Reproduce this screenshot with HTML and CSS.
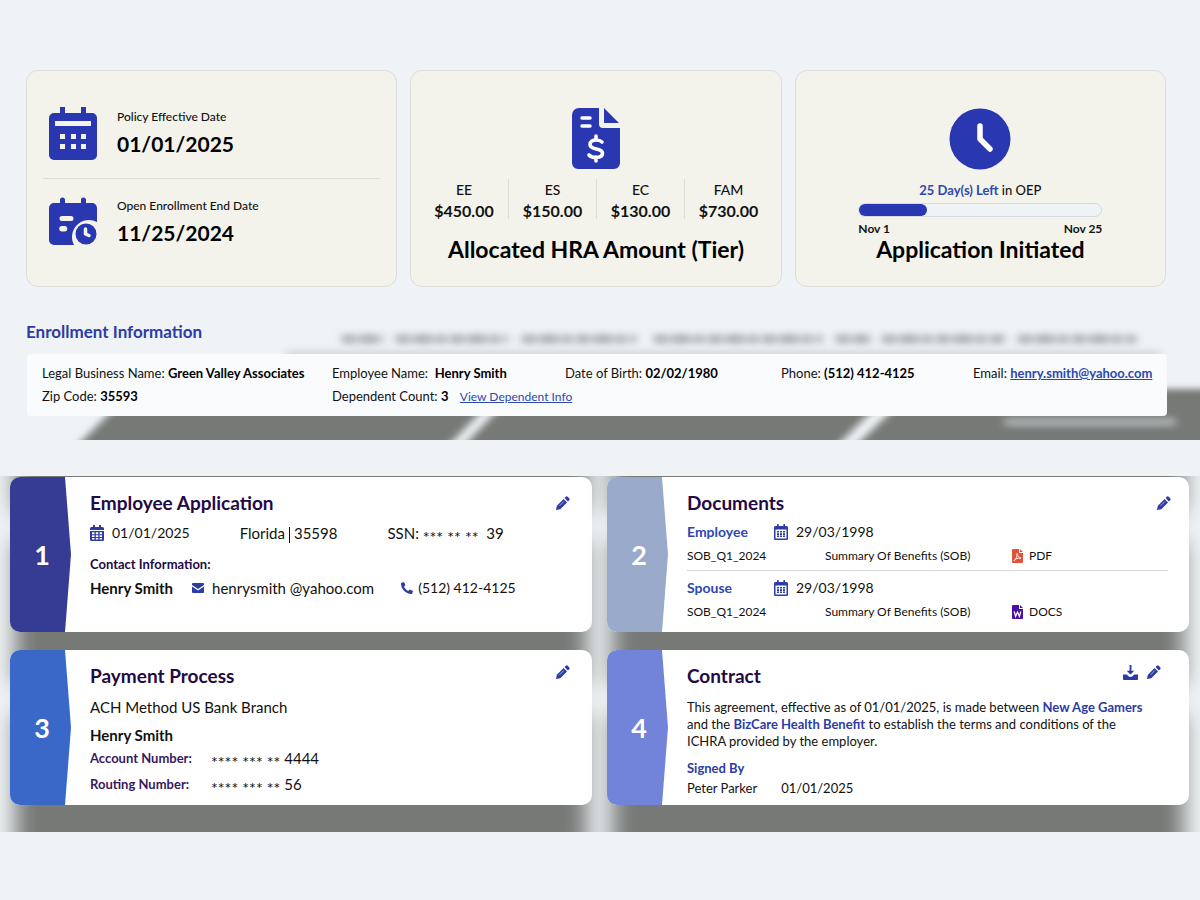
FILE: index.html
```
<!DOCTYPE html>
<html lang="en">
<head>
<meta charset="utf-8">
<title>ICHRA Enrollment</title>
<link rel="stylesheet" href="styles.css">
</head>

<body>
<svg width="0" height="0" class="sprite" aria-hidden="true">
  <symbol id="i-pen" viewBox="0 0 16 16">
    <path d="M1 15l1-4.600 7.200-7.200 3.600 3.600L5.600 14z"/>
    <path d="M10.200 2.200l1.300-1.300a1.400 1.400 0 0 1 2 0l1.600 1.600a1.400 1.400 0 0 1 0 2l-1.300 1.300z"/>
    <path d="M4.800 10.500l4.600-4.600" stroke="#fff" stroke-width=".6"/>
  </symbol>
  <symbol id="i-cal" viewBox="0 0 14 16">
    <path d="M3 0h2v2h4V0h2v2h1.500A1.500 1.500 0 0 1 14 3.500V5H0V3.500A1.500 1.500 0 0 1 1.500 2H3z"/>
    <path fill-rule="evenodd" d="M0 6h14v8.500a1.500 1.500 0 0 1-1.500 1.500h-11A1.500 1.500 0 0 1 0 14.500zM2 7.300v1.900h2.500V7.300zm3.800 0v1.900h2.500V7.300zm3.800 0v1.900H12V7.300zM2 10.200v1.900h2.500v-1.900zm3.800 0v1.900h2.500v-1.900zm3.800 0v1.900H12v-1.900zM2 13.100v1.500h2.500v-1.500zm3.800 0v1.500h2.500v-1.500zm3.800 0v1.500H12v-1.500z"/>
  </symbol>
  <symbol id="i-calo" viewBox="0 0 14 16">
    <path fill-rule="evenodd" d="M3 0h1.600v2h4.800V0H11v2h1.500A1.500 1.500 0 0 1 14 3.500v11a1.500 1.500 0 0 1-1.500 1.500h-11A1.500 1.500 0 0 1 0 14.500v-11A1.500 1.500 0 0 1 1.500 2H3zM1.500 5.500v9h11v-9z"/>
    <path d="M3 7h2v1.600H3zm3 0h2v1.600H6zm3 0h2v1.600H9zM3 9.300h2v1.600H3zm3 0h2v1.600H6zm3 0h2v1.600H9zM3 11.600h2v1.400H3zm3 0h2v1.400H6zm3 0h2v1.400H9z"/>
  </symbol>
</svg>

<section class="overview">
  <div class="tiles">
    <div class="tile tile-dates">
      <div class="date-row">
        <svg class="ico-big" viewBox="0 0 48 54">
          <path fill="#2937b0" d="M11 0h5v6h16V0h5v6h6a5 5 0 0 1 5 5v37a5 5 0 0 1-5 5H5a5 5 0 0 1-5-5V11a5 5 0 0 1 5-5h6z"/>
          <path fill="#f3f3ec" d="M6 14h36v5H6zM11 27h5v5h-5zm11 0h5v5h-5zm10 0h5v5h-5zM11 37h5v5h-5zm11 0h5v5h-5zm10 0h5v5h-5z"/>
        </svg>
        <div>
          <p class="date-label">Policy Effective Date</p>
          <p class="date-value">01/01/2025</p>
        </div>
      </div>
      <div class="date-row">
        <svg class="ico-big" viewBox="0 0 48 54">
          <path fill="#2937b0" d="M11 4a2.500 2.500 0 0 1 5 0v3h16V4a2.500 2.500 0 0 1 5 0v3h6a5 5 0 0 1 5 5v37H5a5 5 0 0 1-5-5V12a5 5 0 0 1 5-5h6z"/>
          <path fill="#f3f3ec" d="M13 20h9a2.500 2.500 0 0 1 0 5h-9a2.500 2.500 0 0 1 0-5zM13 30h2.500a2.500 2.500 0 0 1 0 5.500H13a2.500 2.500 0 0 1 0-5.500zM48 26a17 17 0 0 0-23 23h23z"/>
          <circle cx="37" cy="38" r="10.500" fill="#2937b0"/>
          <path fill="none" stroke="#f3f3ec" stroke-width="3.500" stroke-linecap="round" stroke-linejoin="round" d="M36.500 33v5l3.500 1.500"/>
        </svg>
        <div>
          <p class="date-label">Open Enrollment End Date</p>
          <p class="date-value">11/25/2024</p>
        </div>
      </div>
    </div>

    <div class="tile">
      <svg class="ico-doc" viewBox="0 0 48 62">
        <path fill="#2937b0" d="M7 0h20v16a4 4 0 0 0 4 4h17v35a6 6 0 0 1-6 6H6a6 6 0 0 1-6-6V7a7 7 0 0 1 7-7zM32 0l15 15H32z"/>
        <path fill="none" stroke="#fff" stroke-width="3.500" stroke-linecap="round" d="M10 10h8M10 18h8"/>
        <path fill="none" stroke="#fff" stroke-width="3.600" stroke-linecap="round" d="M24 28v4M24 49v4M30 34c-1.500-1.500-3.500-2-6-2-3.500 0-6 1.600-6 4.400 0 6 12.500 3 12.500 8.700 0 3-2.800 4.400-6.500 4.400-3 0-5.500-.7-7-2.500"/>
      </svg>
      <ul class="tiers">
        <li>EE<b>$450.00</b></li>
        <li>ES<b>$150.00</b></li>
        <li>EC<b>$130.00</b></li>
        <li>FAM<b>$730.00</b></li>
      </ul>
      <h2>Allocated HRA Amount (Tier)</h2>
    </div>

    <div class="tile">
      <svg class="ico-clock" viewBox="0 0 62 62">
        <circle cx="31" cy="31" r="30.500" fill="#2937b0"/>
        <path fill="none" stroke="#fff" stroke-width="5.500" stroke-linecap="round" stroke-linejoin="round" d="M31 18v13l10 10"/>
      </svg>
      <p class="days"><b>25 Day(s) Left</b> in OEP</p>
      <div class="progress">
        <div class="bar"><span style="width: 28%"></span></div>
        <div class="range"><span>Nov 1</span><span>Nov 25</span></div>
      </div>
      <h2>Application Initiated</h2>
    </div>
  </div>

  <h3>Enrollment Information</h3>
  <div class="info-wrap">
    <svg class="backdrop" viewBox="0 0 1200 130" preserveAspectRatio="none" aria-hidden="true">
      <defs>
        <filter id="soft" x="-10%" y="-50%" width="120%" height="200%"><feGaussianBlur stdDeviation="4 3"/></filter>
      </defs>
      <g filter="url(#soft)">
        <path fill="#777977" d="M128 79H497L434 145H62zM512 79H888L822 145H449zM908 79H1160V73H1260V145H840z"/>
        <path fill="none" stroke="#a9adae" stroke-width="8" d="M1005 106H1175"/>
        <path fill="none" stroke="#a3a8a9" stroke-width="10" stroke-dasharray="14 3 20 3 10 4" opacity=".8" d="M342 23H384M396 23H508M522 23H636M654 23H822M836 23H870M882 23H1004M1018 23H1136"/>
        <path fill="none" stroke="#d3d8d9" stroke-width="9" d="M286 39H1160"/>
      </g>
    </svg>
    <div class="info">
      <p>Legal Business Name: <b>Green Valley Associates</b></p>
      <p>Employee Name: &nbsp;<b>Henry Smith</b></p>
      <p>Date of Birth: <b>02/02/1980</b></p>
      <p>Phone: <b>(512) 412-4125</b></p>
      <p>Email: <b><a href="#">henry.smith@yahoo.com</a></b></p>
      <p>Zip Code: <b>35593</b></p>
      <p class="dependents">Dependent Count: <b>3</b> <a href="#">View Dependent Info</a></p>
    </div>
  </div>
</section>

<section class="steps">
  <article class="step step1">
    <div class="num">1</div>
    <div class="body">
      <header><h4>Employee Application</h4><button type="button" title="Edit"><svg><use href="#i-pen"/></svg></button></header>
      <div class="line app-line">
        <span class="with-ico date"><svg class="ico"><use href="#i-cal"/></svg>01/01/2025</span>
        <span>Florida<i class="sep"></i>35598</span>
        <span>SSN: <span class="mask">*** ** **</span> &nbsp;39</span>
      </div>
      <h5>Contact Information:</h5>
      <div class="line contact-line">
        <b>Henry Smith</b>
        <span class="with-ico"><svg class="ico-s" viewBox="0 0 12 10"><path d="M1 0h10a1 1 0 0 1 1 1v1L6 6 0 2V1a1 1 0 0 1 1-1zM0 3.400l6 4 6-4V9a1 1 0 0 1-1 1H1a1 1 0 0 1-1-1z"/></svg>henrysmith @yahoo.com</span>
        <span class="with-ico phone"><svg class="ico-s" viewBox="0 0 12 12"><path d="M.6.800L3 0l1.500 3.200L3 4.600C3.700 6.500 5.300 8.200 7.300 9l1.400-1.500L12 9l-.8 2.500c-.2.400-.5.500-1 .5C4.600 11.800.3 7.300 0 1.800c0-.5.2-.800.6-1z"/></svg>(512) 412-4125</span>
      </div>
    </div>
  </article>

  <article class="step step2">
    <div class="num">2</div>
    <div class="body">
      <header><h4>Documents</h4><button type="button" title="Edit"><svg><use href="#i-pen"/></svg></button></header>
      <div class="doc">
        <b class="who">Employee</b>
        <span class="with-ico when"><svg class="ico"><use href="#i-calo"/></svg>29/03/1998</span>
        <span class="file">SOB_Q1_2024</span>
        <span class="kind">Summary Of Benefits (SOB)</span>
        <span class="type"><svg viewBox="0 0 11 14"><path fill="#e0533a" d="M1 0h6v4h4v9a1 1 0 0 1-1 1H1a1 1 0 0 1-1-1V1a1 1 0 0 1 1-1zM8 0l3 3H8z"/><path fill="none" stroke="#fff" stroke-width=".9" d="M5 4.500c.5 3-1 5.500-3 7.300 1-2 4-3 7-2.600C7 9 5.500 7 5 4.500"/></svg>PDF</span>
      </div>
      <div class="doc">
        <b class="who">Spouse</b>
        <span class="with-ico when"><svg class="ico"><use href="#i-calo"/></svg>29/03/1998</span>
        <span class="file">SOB_Q1_2024</span>
        <span class="kind">Summary Of Benefits (SOB)</span>
        <span class="type"><svg viewBox="0 0 11 14"><path fill="#4a0fa5" d="M1 0h6v4h4v9a1 1 0 0 1-1 1H1a1 1 0 0 1-1-1V1a1 1 0 0 1 1-1zM8 0l3 3H8z"/><path fill="none" stroke="#fff" stroke-width="1.200" d="M2.200 6.500l1.400 5 1.900-4.500 1.900 4.500 1.400-5"/></svg>DOCS</span>
      </div>
    </div>
  </article>

  <article class="step step3">
    <div class="num">3</div>
    <div class="body">
      <header><h4>Payment Process</h4><button type="button" title="Edit"><svg><use href="#i-pen"/></svg></button></header>
      <p class="method">ACH Method US Bank Branch</p>
      <p class="holder">Henry Smith</p>
      <dl>
        <dt>Account Number:</dt>
        <dd><span class="mask">**** *** **</span> 4444</dd>
        <dt>Routing Number:</dt>
        <dd><span class="mask">**** *** **</span> 56</dd>
      </dl>
    </div>
  </article>

  <article class="step step4">
    <div class="num">4</div>
    <div class="body">
      <header>
        <h4>Contract</h4>
        <button type="button" title="Download"><svg viewBox="0 0 16 16"><path d="M7 0h2v6h3L8 10 4 6h3zM0 10h4l2.500 2.500h3L12 10h4v5a1 1 0 0 1-1 1H1a1 1 0 0 1-1-1z"/></svg></button>
        <button type="button" title="Edit"><svg><use href="#i-pen"/></svg></button>
      </header>
      <p class="terms">This agreement, effective as of 01/01/2025, is made between <b>New Age Gamers</b> and the <b>BizCare Health Benefit</b> to establish the terms and conditions of the ICHRA provided by the employer.</p>
      <p class="signed">Signed By</p>
      <p class="signer"><span>Peter Parker</span><span>01/01/2025</span></p>
    </div>
  </article>
</section>
</body>
</html>
```
FILE: styles.css
```
* {box-sizing: border-box;}
body {margin: 0; background: #eff3f5; color: #111; font-family: Lato, "Liberation Sans", sans-serif; font-size: 13px; line-height: 20px;}
h2, h3, h4, h5, p, ul, dl, dd {margin: 0; padding: 0;}
.sprite {position: absolute;}

.overview {padding-top: 70px;}
.tiles {display: grid; grid-template-columns: repeat(3, 1fr); gap: 13px; padding: 0 34px 0 26px;}
.tile {display: flex; flex-direction: column; align-items: center; height: 217px; padding-top: 37px; border: 1px solid #dcdddb; border-radius: 12px; background: #f3f3ec;}
.tile h2 {font-size: 23px; line-height: 28px; font-weight: 900; color: #000;}
.tile-dates {align-items: stretch; padding: 19px 16px;}
.date-row {display: flex; align-items: center; gap: 20px; height: 88px; padding-left: 6px;}
.date-row + .date-row {border-top: 1px solid #dcdddb;}
.ico-big {width: 48px; height: 54px;}
.date-label {font-size: 12px; line-height: 20px; font-weight: 500;}
.date-value {font-size: 21px; line-height: 34px; font-weight: 900; color: #000;}
.ico-doc {width: 48px; height: 62px;}
.ico-clock {width: 62px; height: 62px;}

.tiers {display: flex; margin: 9px 0 16px; list-style: none; font-size: 14px; line-height: 22px; text-align: center; font-weight: 500;}
.tiers li {width: 88px; height: 40px;}
.tiers li + li {border-left: 1px solid #dcdddb;}
.tiers b {display: block; font-size: 16px; line-height: 20px;}
.tile h2, .date-value {font-weight: 700;}

.days {margin-top: 10px; font-weight: 500;}
.days b {color: #2c48b0;}
.progress {width: 244px; margin-top: 3px;}
.bar {height: 14px; border: 1px solid #d5d9dc; border-radius: 7px; background: #eff3f5;}
.bar span {display: block; height: 12px; border-radius: 6px; background: #2937b0;}
.range {display: flex; justify-content: space-between; margin-top: 6px; font-size: 12px; line-height: 12px; font-weight: 700;}

.overview h3 {margin: 34px 26px 13px; font-size: 17px; line-height: 21px; color: #2c3ba5;}
.info-wrap {position: relative; overflow: hidden; height: 124px; margin-top: -39px; padding: 38px 33px 0 27px;}
.backdrop {position: absolute; left: 0; top: 0; width: 100%; height: 130px;}
.info {position: relative; display: grid; grid-template-columns: 290px 233px 216px 192px auto; align-content: center; row-gap: 3px; height: 62px; padding: 0 0 0 15px; border-radius: 4px; background: #f9fbfd; white-space: nowrap;}
.info b {color: #000;}
.info a {color: #2c48b0;}
.dependents a {margin-left: 8px; font-size: 12px;}

.steps {display: grid; grid-template-columns: 1fr 1fr; gap: 18px 15px; height: 356px; margin-top: 36px; padding: 1px 11px 0 10px; overflow: hidden; align-content: start;}
.step {display: flex; height: 155px; border-radius: 10px; background: #fff; box-shadow: 0 58px 22px -5px #777977;}
.step1, .step2 {box-shadow: 0 58px 22px -5px #777977, 0 -114px 22px -5px #777977;}
.num {flex: 0 0 61px; padding-left: 3px; border-radius: 10px 0 0 10px; clip-path: polygon(0 0, 55px 0, 61px 50%, 55px 100%, 0 100%); color: #fff; font-size: 27px; font-weight: 700; line-height: 155px; text-align: center;}
.step1 .num {background: #363b94;}
.step2 .num {background: #99aacb;}
.step3 .num {background: #3968c8;}
.step4 .num {background: #7283da;}
.body {flex: 1; padding: 14px 22px 0 19px;}
.body header {display: flex; align-items: center; gap: 8px; height: 24px;}
.body h4 {flex: 1; font-size: 19px; line-height: 24px; color: #230a45;}
.body button {width: 15px; height: 15px; padding: 0; border: 0; background: none; cursor: pointer;}
.body button svg {display: block; width: 15px; height: 15px; fill: #2c3ba5;}
.step3 button, .step4 button {margin-bottom: 8px;}
.step4 header {padding-right: 6px;}
.body h5 {font-size: 13px; line-height: 20px; color: #230a45;}
.line {display: flex; font-size: 15px; line-height: 24px; white-space: nowrap;}
.with-ico {display: flex; align-items: center; gap: 8px; fill: #2c3ba5;}
.ico {width: 14px; height: 16px;}
.ico-s {width: 12px; height: 12px;}
.app-line {gap: 50px; margin: 6px 0 9px;}
.contact-line {gap: 19px; margin-top: 2px;}
.date, .phone {font-size: 14px;}
.phone {gap: 5px; margin-left: 8px;}
.sep {display: inline-block; height: 16px; margin: 0 4px; border-left: 1px solid #111; vertical-align: middle;}
.mask {font-size: 16px; line-height: 16px; vertical-align: sub;}

.step2 .body {padding-right: 18px;}
.doc {display: grid; grid-template-columns: 87px 51px 187px auto; margin-right: 3px; padding: 5px 0 2px; font-size: 12px; line-height: 24px; white-space: nowrap;}
.doc + .doc {border-top: 1px solid #d8d8da;}
.who {font-size: 14px; color: #2c48b0;}
.when {grid-column: span 3; font-size: 14px;}
.file {grid-column: span 2;}
.type {display: flex; align-items: center; gap: 6px;}
.type svg {width: 11px; height: 14px;}

.method {margin-top: 8px; font-size: 15px; line-height: 22px;}
.holder {margin-top: 7px; font-size: 15px; line-height: 20px; font-weight: 700;}
dl {display: grid; grid-template-columns: 121px auto; line-height: 26px;}
dt {font-weight: 700; color: #38195e;}
dd {font-size: 15px;}

.terms {margin-top: 11px; padding-right: 12px; line-height: 17px;}
.terms b, .signed {color: #2c3ba5;}
.signed {margin-top: 8px; font-weight: 700;}
.signer {display: flex; gap: 24px; font-size: 13px;}
```
